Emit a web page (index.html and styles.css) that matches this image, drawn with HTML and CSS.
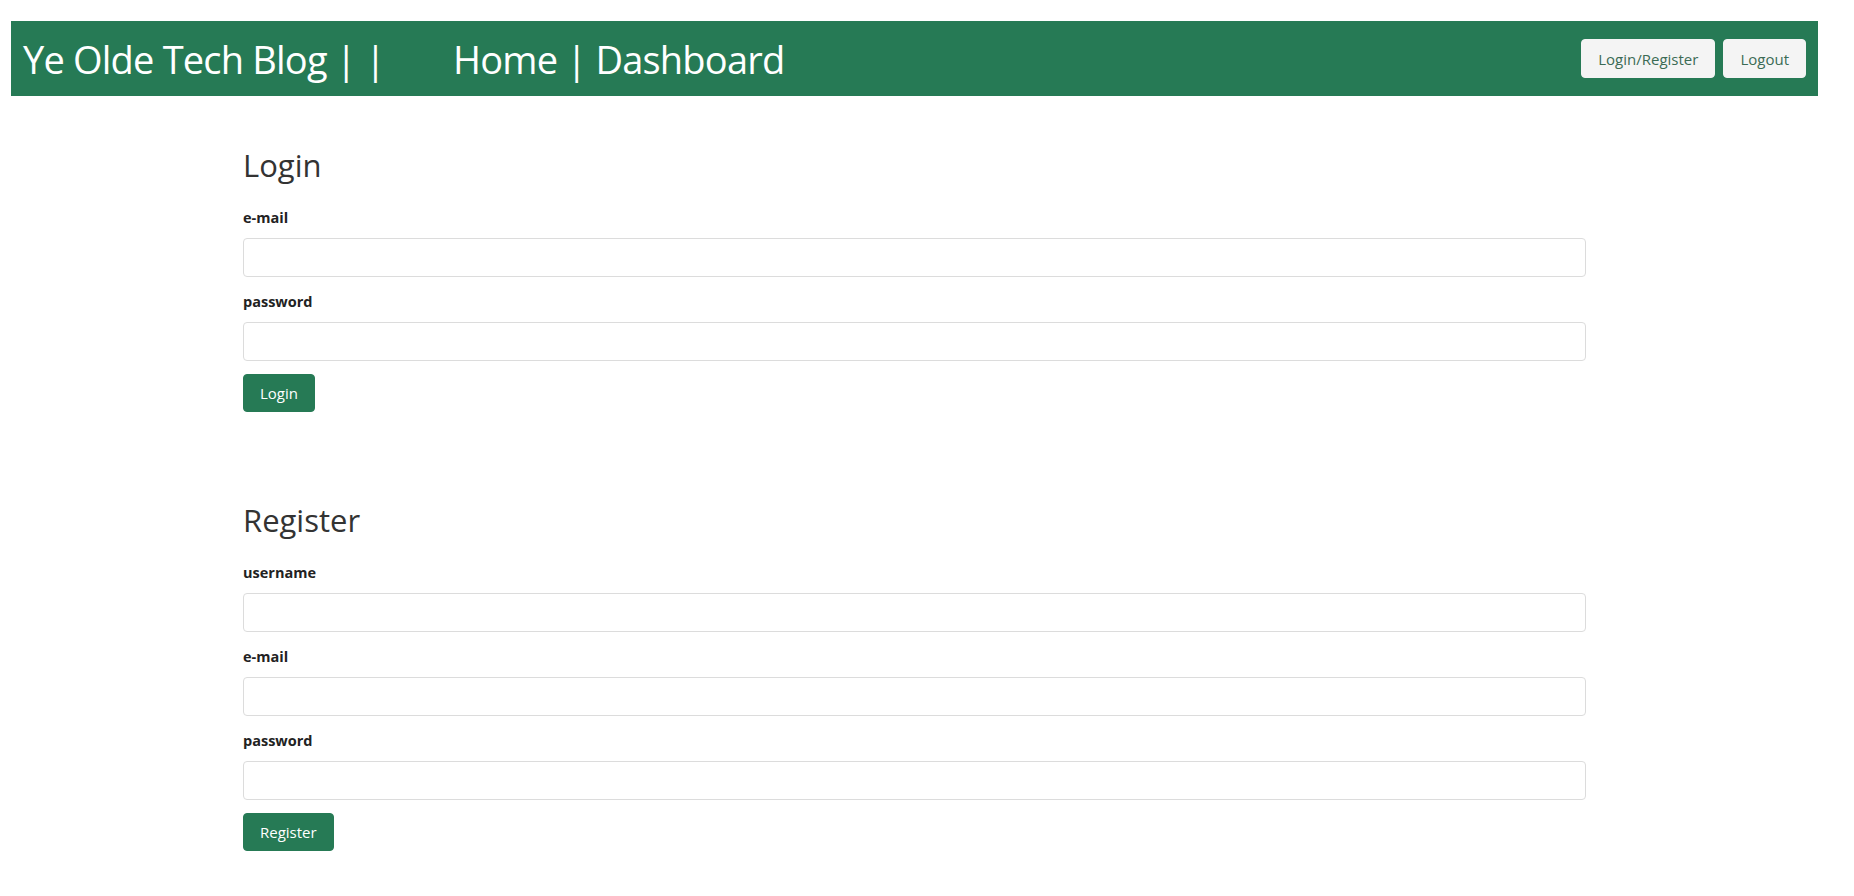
FILE: index.html
```html
<!DOCTYPE html>
<html lang="en">
<head>
<meta charset="utf-8">
<title>Ye Olde Tech Blog</title>
<link rel="stylesheet" href="styles.css">
</head>
<body>
<header class="topbar">
  <div class="brand">
    <span class="brand-title">Ye Olde Tech Blog | |</span>
    <nav class="brand-nav"><a href="#">Home</a> | <a href="#">Dashboard</a></nav>
  </div>
  <div class="topbar-actions">
    <button class="btn-light">Login/Register</button>
    <button class="btn-light">Logout</button>
  </div>
</header>
<main class="content">
  <section class="form-section">
    <h2 class="form-title">Login</h2>
    <form class="form">
      <label class="form-label" for="login-email">e-mail</label>
      <input class="form-input" id="login-email" type="text">
      <label class="form-label" for="login-password">password</label>
      <input class="form-input" id="login-password" type="password">
      <div class="form-actions"><button type="button" class="btn-green">Login</button></div>
    </form>
  </section>
  <section class="form-section register">
    <h2 class="form-title">Register</h2>
    <form class="form">
      <label class="form-label" for="reg-username">username</label>
      <input class="form-input" id="reg-username" type="text">
      <label class="form-label" for="reg-email">e-mail</label>
      <input class="form-input" id="reg-email" type="text">
      <label class="form-label" for="reg-password">password</label>
      <input class="form-input" id="reg-password" type="password">
      <div class="form-actions"><button type="button" class="btn-green">Register</button></div>
    </form>
  </section>
</main>
</body>
</html>
```

FILE: styles.css
```css
* { box-sizing: border-box; }

body {
  margin: 21px 36px 0 11px;
  font-family: "Open Sans", "Noto Sans", sans-serif;
  color: #212529;
  background: #fff;
}

.topbar {
  height: 75px;
  background: #267a55;
  display: flex;
  align-items: center;
  justify-content: space-between;
  padding: 0 12px 0 12px;
}

.brand {
  display: flex;
  align-items: center;
  gap: 68px;
  color: #fff;
  font-size: 38px;
  letter-spacing: -0.8px;
  line-height: 1;
}

.brand-nav a {
  color: #fff;
  text-decoration: none;
}

.topbar-actions {
  display: flex;
  gap: 8px;
}

.btn-light {
  height: 39px;
  padding: 0 16px;
  border: 1px solid #f4f4f4;
  border-radius: 4px;
  background: #f4f4f4;
  color: #3b6b55;
  font-family: inherit;
  font-size: 15px;
}

.content {
  padding: 0 232px;
}

.form-section {
  padding-top: 51px;
}

.form-section.register {
  padding-top: 90px;
}

.form-title {
  margin: 0 0 22px;
  font-size: 31px;
  font-weight: 500;
  line-height: 1.2;
  color: #333;
}

.form {
  display: flex;
  flex-direction: column;
}

.form-label {
  font-size: 14.5px;
  font-weight: 700;
  line-height: 24px;
  margin-bottom: 8px;
  color: #222;
}

.form-input {
  height: 39px;
  margin: 0 0 13px;
  border: 1px solid #dcdcdc;
  border-radius: 4px;
  font-family: inherit;
  font-size: 16px;
  padding: 6px 12px;
}

.form-actions {
  display: flex;
}

.btn-green {
  height: 38px;
  padding: 0 16px;
  border: 1px solid #267a55;
  border-radius: 4px;
  background: #267a55;
  color: #fff;
  font-family: inherit;
  font-size: 15px;
}
```
